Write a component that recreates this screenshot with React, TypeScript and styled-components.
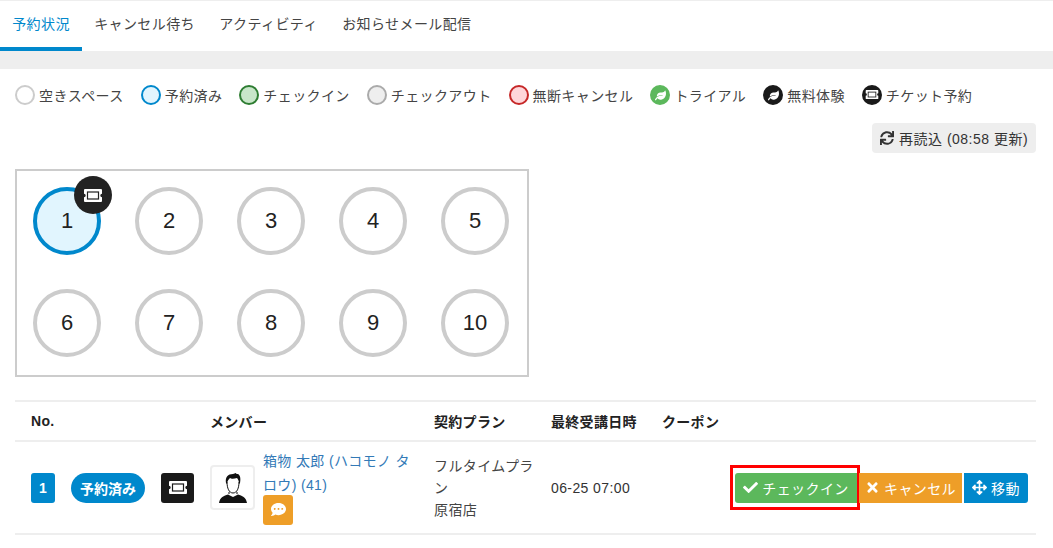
import React from 'react'
import styled, { createGlobalStyle } from 'styled-components'
import { FaCheck, FaTimes, FaArrowsAlt, FaSync, FaCommentDots, FaLeaf } from 'react-icons/fa'

const GlobalStyle = createGlobalStyle`
  html, body { margin: 0; padding: 0; background: #fff; }
  body {
    font-family: "Liberation Sans", "Noto Sans CJK JP", sans-serif;
    font-size: 14px;
    color: #333;
  }
  * { box-sizing: border-box; }
`

const Page = styled.div`
  width: 1053px;
  height: 548px;
  overflow: hidden;
  border-top: 1px solid #eee;
`

const Tabs = styled.nav`
  display: flex;
  height: 50px;
`

const Tab = styled.div<{ $active?: boolean }>`
  height: 50px;
  padding: 13px 12.2px 0;
  font-size: 14px;
  letter-spacing: 0.4px;
  line-height: 20px;
  white-space: nowrap;
  color: ${p => (p.$active ? '#0088cc' : '#444')};
  border-bottom: 4px solid ${p => (p.$active ? '#0088cc' : 'transparent')};
`

const Band = styled.div`
  height: 18px;
  background: #eee;
`

const Content = styled.main`
  padding: 0 17px 0 15px;
`

const Legend = styled.div`
  display: flex;
  align-items: center;
  height: 20px;
  margin-top: 16px;
  gap: 17px;
`

const LegendItem = styled.div`
  display: flex;
  align-items: center;
  gap: 4px;
  font-size: 14px;
  letter-spacing: 0.4px;
  color: #444;
  white-space: nowrap;
`

const Dot = styled.span<{ $border: string; $fill: string }>`
  width: 20px;
  height: 20px;
  border-radius: 50%;
  flex: none;
  display: flex;
  align-items: center;
  justify-content: center;
  border: 2px solid ${p => p.$border};
  background: ${p => p.$fill};
  color: #fff;
  font-size: 11px;
`

const ReloadRow = styled.div`
  display: flex;
  justify-content: flex-end;
  margin-top: 18px;
`

const ReloadButton = styled.button`
  display: flex;
  align-items: center;
  gap: 5px;
  height: 30px;
  width: 164px;
  padding: 0 0 0 8px;
  border: 0;
  border-radius: 4px;
  background: #eee;
  color: #333;
  font: inherit;
  font-size: 14px;
  letter-spacing: 0.5px;
  white-space: nowrap;
  svg { font-size: 14px; flex: none; }
`

const SeatBox = styled.section`
  width: 514px;
  height: 208px;
  margin-top: 16px;
  border: 2px solid #ccc;
  padding: 16px;
  display: grid;
  grid-template-columns: repeat(5, 68px);
  grid-auto-rows: 68px;
  column-gap: 34px;
  row-gap: 34px;
`

const Seat = styled.div<{ $reserved?: boolean }>`
  position: relative;
  width: 68px;
  height: 68px;
  border-radius: 50%;
  display: flex;
  align-items: center;
  justify-content: center;
  font-size: 22px;
  color: #222;
  border: 4px solid ${p => (p.$reserved ? '#0088cc' : '#ccc')};
  background: ${p => (p.$reserved ? '#e1f5fe' : '#fff')};
`

const SeatBadge = styled.span`
  position: absolute;
  top: -15px;
  left: 37px;
  width: 38px;
  height: 38px;
  border-radius: 50%;
  background: #222;
  display: flex;
  align-items: center;
  justify-content: center;
`

const Table = styled.section`
  margin-top: 23px;
  border-top: 2px solid #eee;
`

const Row = styled.div<{ $height: number }>`
  display: grid;
  grid-template-columns: 195px 224px 117px 111px 1fr;
  height: ${p => p.$height}px;
  border-bottom: 2px solid #eee;
`

const HeadCell = styled.div<{ $pad?: number }>`
  padding-left: ${p => p.$pad ?? 0}px;
  align-self: center;
  font-size: 14px;
  font-weight: 700;
  letter-spacing: 0.3px;
  color: #222;
  white-space: nowrap;
`

const Cell = styled.div`
  display: flex;
  align-items: center;
  font-size: 14px;
  color: #333;
`

const StatusCell = styled(Cell)`
  padding-left: 16px;
`

const NoBadge = styled.span`
  width: 24px;
  height: 30px;
  border-radius: 3px;
  background: #0088cc;
  color: #fff;
  font-size: 14px;
  font-weight: 700;
  display: flex;
  align-items: center;
  justify-content: center;
`

const StatusPill = styled.span`
  width: 74px;
  height: 30px;
  margin-left: 16px;
  border-radius: 15px;
  background: #0088cc;
  color: #fff;
  font-size: 14px;
  font-weight: 700;
  display: flex;
  align-items: center;
  justify-content: center;
  white-space: nowrap;
`

const TicketTag = styled.span`
  width: 33px;
  height: 30px;
  margin-left: 16px;
  border-radius: 3px;
  background: #1a1a1a;
  display: flex;
  align-items: center;
  justify-content: center;
`

const Avatar = styled.span`
  width: 45px;
  height: 45px;
  flex: none;
  border: 2px solid #eee;
  border-radius: 4px;
  display: flex;
  align-items: center;
  justify-content: center;
  background: #fff;
`

const MemberInfo = styled.div`
  margin-left: 8px;
  width: 155px;
  padding-bottom: 2px;
`

const MemberName = styled.a`
  display: block;
  color: #337ab7;
  font-size: 14px;
  letter-spacing: 0.35px;
  line-height: 24px;
`

const CommentButton = styled.span`
  width: 30px;
  height: 30px;
  margin-top: -2px;
  border-radius: 3px;
  background: #ee9e28;
  color: #fff;
  display: flex;
  align-items: center;
  justify-content: center;
  font-size: 15px;
`

const PlanCell = styled.div`
  align-self: center;
  width: 104px;
  font-size: 14px;
  letter-spacing: 0.4px;
  line-height: 22px;
  color: #444;
`

const DateCell = styled(Cell)`
  font-size: 14px;
  letter-spacing: 0.4px;
`

const Actions = styled.div`
  display: flex;
  align-items: center;
  gap: 2px;
  margin-left: 73px;
`

const ActionButton = styled.button<{ $bg: string; $w: number; $outlined?: boolean; $radius: string }>`
  position: relative;
  width: ${p => p.$w}px;
  height: 30px;
  padding: 0;
  border: 0;
  border-radius: ${p => p.$radius};
  background: ${p => p.$bg};
  color: #fff;
  font: inherit;
  font-size: 14px;
  letter-spacing: 0.4px;
  white-space: nowrap;
  display: flex;
  align-items: center;
  justify-content: center;
  gap: 4px;
  svg { font-size: 15px; flex: none; }
  ${p =>
    p.$outlined &&
    `&::after {
      content: '';
      position: absolute;
      left: -5px;
      right: -3px;
      top: -8px;
      bottom: -7px;
      border: 3px solid #f00;
    }`}
`

const TicketIcon = ({ size = 20, bg = '#222' }: { size?: number; bg?: string }) => (
  <svg width={size} height={(size * 13) / 20} viewBox="0 0 20 13">
    <path
      fill="#fff"
      d="M2 0h16a1 1 0 0 1 1 1v3.800a1.700 1.700 0 0 0 0 3.400V12a1 1 0 0 1-1 1H2a1 1 0 0 1-1-1V8.200a1.700 1.700 0 0 0 0-3.400V1a1 1 0 0 1 1-1z"
    />
    <rect x="4.500" y="3" width="11" height="7" fill="#fff" stroke={bg} strokeWidth="1.200" />
  </svg>
)

const AvatarIcon = () => (
  <svg width="28" height="30" viewBox="0 0 28 30">
    <path
      fill="#111"
      d="M7 10C6 4 9 1 14 1c1 0 2-1 3-1 0 1 1 1 2 1 2 1 3 4 2 9l-1 1c0-3-1-5-2-6-3 1-6 1-7 0-1 1-3 3-3 6z"
    />
    <path
      fill="none"
      stroke="#111"
      strokeWidth="1"
      d="M8 9c0 6 2 11 6 11s6-5 6-11M10 19v2M18 19v2"
    />
    <path fill="#111" d="M9 21.500l5 2.500 5-2.500c4 1.200 8 2.500 9 8.500H0c1-6 5-7.300 9-8.500z" />
  </svg>
)

const legend = [
  { label: '空きスペース', border: '#ccc', fill: '#fff' },
  { label: '予約済み', border: '#0088cc', fill: '#e1f5fe' },
  { label: 'チェックイン', border: '#2e7d32', fill: '#c8e6c9' },
  { label: 'チェックアウト', border: '#aaa', fill: '#eee' },
  { label: '無断キャンセル', border: '#c62828', fill: '#ffd6da' },
]

export default function App() {
  return (
    <>
      <GlobalStyle />
      <Page>
        <Tabs>
          <Tab $active>予約状況</Tab>
          <Tab>キャンセル待ち</Tab>
          <Tab>アクティビティ</Tab>
          <Tab>お知らせメール配信</Tab>
        </Tabs>
        <Band />
        <Content>
          <Legend>
            {legend.map(item => (
              <LegendItem key={item.label}>
                <Dot $border={item.border} $fill={item.fill} />
                {item.label}
              </LegendItem>
            ))}
            <LegendItem>
              <Dot $border="#5cb85c" $fill="#5cb85c">
                <FaLeaf />
              </Dot>
              トライアル
            </LegendItem>
            <LegendItem>
              <Dot $border="#1a1a1a" $fill="#1a1a1a">
                <FaLeaf />
              </Dot>
              無料体験
            </LegendItem>
            <LegendItem>
              <Dot $border="#1a1a1a" $fill="#1a1a1a">
                <TicketIcon size={14} bg="#1a1a1a" />
              </Dot>
              チケット予約
            </LegendItem>
          </Legend>
          <ReloadRow>
            <ReloadButton>
              <FaSync />
              再読込 (08:58 更新)
            </ReloadButton>
          </ReloadRow>
          <SeatBox>
            {Array.from({ length: 10 }, (_, i) => (
              <Seat key={i} $reserved={i === 0}>
                {i + 1}
                {i === 0 && (
                  <SeatBadge>
                    <TicketIcon />
                  </SeatBadge>
                )}
              </Seat>
            ))}
          </SeatBox>
          <Table>
            <Row $height={40}>
              <HeadCell $pad={16}>No.</HeadCell>
              <HeadCell>メンバー</HeadCell>
              <HeadCell>契約プラン</HeadCell>
              <HeadCell>最終受講日時</HeadCell>
              <HeadCell>クーポン</HeadCell>
            </Row>
            <Row $height={93}>
              <StatusCell>
                <NoBadge>1</NoBadge>
                <StatusPill>予約済み</StatusPill>
                <TicketTag>
                  <TicketIcon bg="#1a1a1a" />
                </TicketTag>
              </StatusCell>
              <Cell>
                <Avatar>
                  <AvatarIcon />
                </Avatar>
                <MemberInfo>
                  <MemberName>箱物 太郎 (ハコモノ タロウ) (41)</MemberName>
                  <CommentButton>
                    <FaCommentDots />
                  </CommentButton>
                </MemberInfo>
              </Cell>
              <PlanCell>
                フルタイムプラン
                <br />
                原宿店
              </PlanCell>
              <DateCell>06-25 07:00</DateCell>
              <Cell>
                <Actions>
                  <ActionButton $bg="#5cb85c" $w={122} $radius="3px 0 0 3px" $outlined>
                    <FaCheck />
                    チェックイン
                  </ActionButton>
                  <ActionButton $bg="#ee9e28" $w={103} $radius="0">
                    <FaTimes />
                    キャンセル
                  </ActionButton>
                  <ActionButton $bg="#0088cc" $w={64} $radius="0 3px 3px 0">
                    <FaArrowsAlt />
                    移動
                  </ActionButton>
                </Actions>
              </Cell>
            </Row>
          </Table>
        </Content>
      </Page>
    </>
  )
}
